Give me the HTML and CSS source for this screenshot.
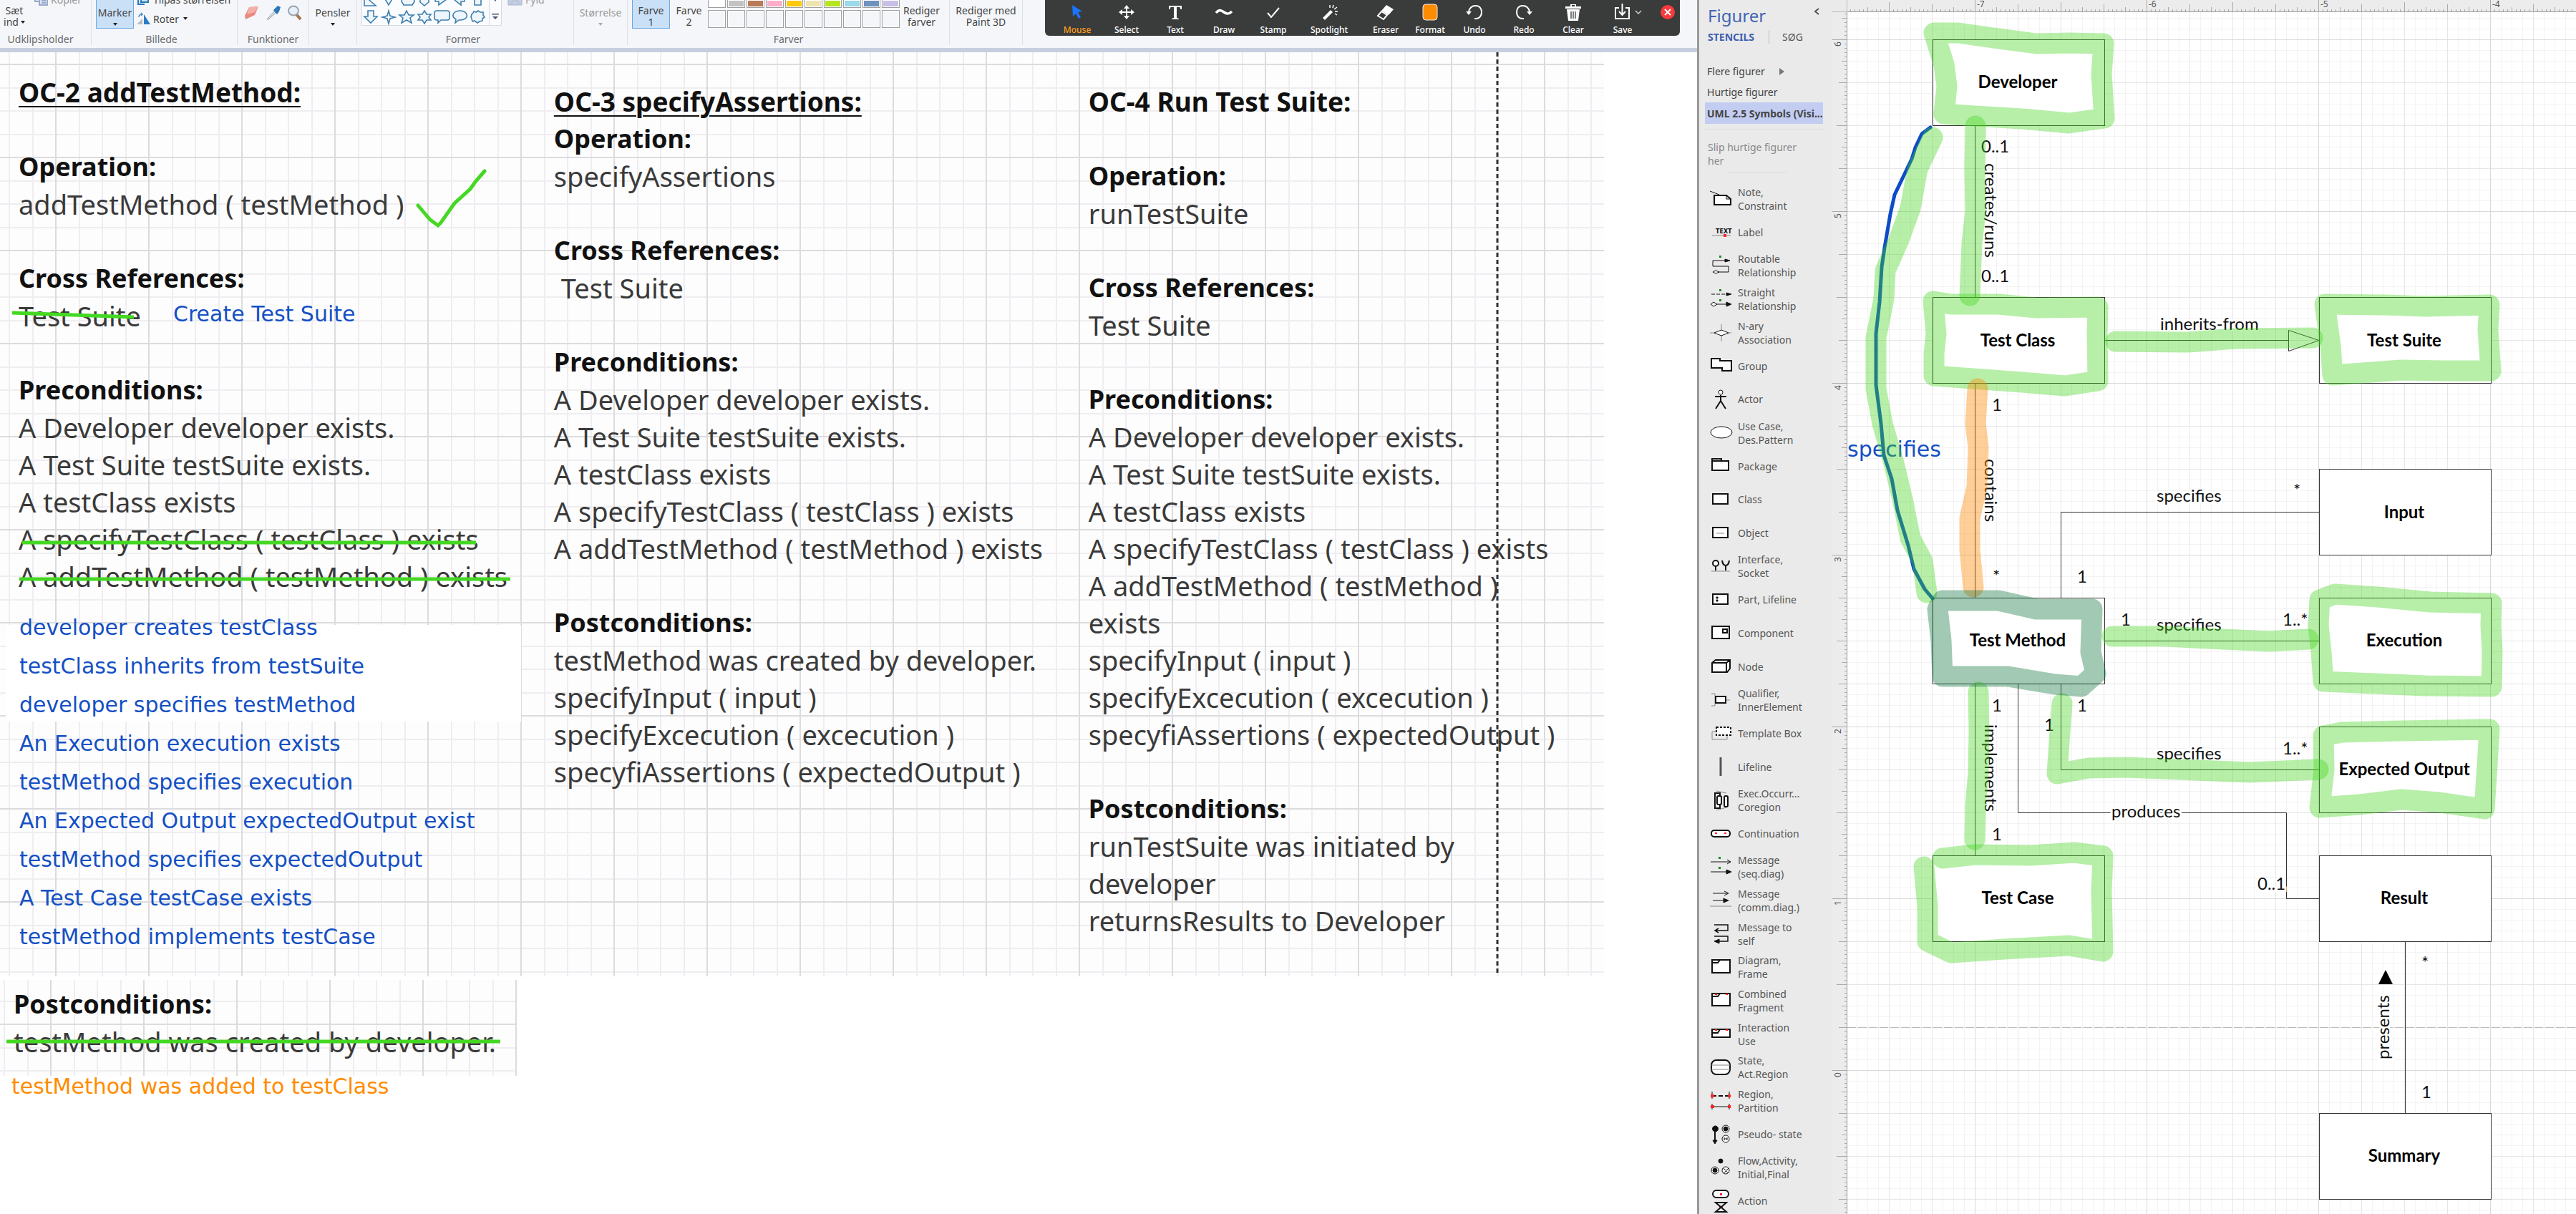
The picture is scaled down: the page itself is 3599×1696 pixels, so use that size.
FILE: index.html
```html
<!DOCTYPE html>
<html lang="da">
<head>
<meta charset="utf-8">
<title>Operation contracts</title>
<link rel="stylesheet" href="styles.css">
</head>
<body>
<main class="paint">
  <header class="ribbon">
    <section class="group group-clip">
      <div class="tools">
        <button class="tool tool-paste">Sæt<br>ind<i class="caret caret-inline"></i></button>
        <button class="cut-item is-disabled"><svg width="20" height="10" viewBox="0 0 20 10"><path d="M1 0v4h6M7 0v9h11V0M10 3h6M10 6h6" fill="#dfe5f2" stroke="#9aa9cc" stroke-width="2"/></svg>Kopier</button>
      </div>
      <h2>Udklipsholder</h2>
    </section>
    <section class="group group-image">
      <div class="tools">
        <button class="tool tool-on tool-split">Marker<i class="caret"></i></button>
        <div class="stack">
          <button class="cut-item"><svg width="20" height="10" viewBox="0 0 20 10"><path d="M2 2v6h9M6 0v5h10V0" fill="#cfe3f7" stroke="#2a78b8" stroke-width="2"/></svg>Tilpas størrelsen</button>
          <button class="row-item"><svg width="20" height="18" viewBox="0 0 20 18"><path d="M0 16L8 8v8z" fill="#b9bcc0"/><path d="M10 2v14h9z" fill="#2b7cc4"/><path d="M3 6c0-3 2-4 4-4M6 0l2 2-2 2" fill="none" stroke="#4a90d0" stroke-width="1.5"/></svg>Roter<i class="caret caret-inline"></i></button>
        </div>
      </div>
      <h2>Billede</h2>
    </section>
    <section class="group group-tools">
      <div class="tools icon-tools">
        <button aria-label="Viskelæder"><svg width="22" height="20" viewBox="0 0 22 20"><path d="M7 2l13-1-5 12-13 6-1-5z" fill="#e88a80"/><path d="M7 2l13-1-5 8-11 3z" fill="#f4b0a8"/></svg></button>
        <button aria-label="Farvevælger"><svg width="22" height="20" viewBox="0 0 22 20"><path d="M2 19L12 8l2 2L4 19z" fill="#dfe9f2" stroke="#8796a6"/><path d="M11 6l6-6 4 2-2 6-3 4z" fill="#2d75b8"/></svg></button>
        <button aria-label="Lup"><svg width="22" height="20" viewBox="0 0 22 20"><path d="M13 12l6 7" stroke="#a5764a" stroke-width="4"/><ellipse cx="9" cy="7" rx="7" ry="6.500" fill="#e6f0f8" stroke="#98a4b0" stroke-width="2"/></svg></button>
      </div>
      <h2>Funktioner</h2>
    </section>
    <section class="group group-brush">
      <div class="tools"><button class="tool">Pensler<i class="caret"></i></button></div>
    </section>
    <section class="group group-shapes">
      <div class="tools">
        <svg class="gallery" width="196" height="36" viewBox="0 0 196 36" aria-label="Former">
          <path d="M.5 0v35.500h195V0M178.500 0v35" fill="#fbfcfe" stroke="#d5dbe4"/>
          <g fill="#eef6fc" stroke="#3f7fae" stroke-width="1.600">
            <path d="M4-6L20 8H4zM32-3l6 10 6-10M56-4v6l3 5h12l3-5v-6M82-4v7l6 5 6-5v-7M103-6v8h5v5l11-8M144-6v8h-5v5l-10-8M158-4V7h9v-11"/>
            <path d="M9 15h8v8h5l-9 9-9-9h5zM38 15l2 7 7 2-7 2-2 7-2-7-7-2 7-2zM63 15l3 6h7l-5 4 2 7-7-4-7 4 2-7-5-4h7zM88 15l3 5h6l-3 4 3 4h-6l-3 5-3-5h-6l3-4-3-4h6zM105 15h15q3 0 3 3v7q0 3-3 3h-9l-4 4v-4h-2q-3 0-3-3v-7q0-3 3-3zM138 15c12 0 13 13 0 13h-2l-5 4 1-5c-8-5-3-12 6-12zM157 16l3 1 3-2 3 2h4v4l2 3-3 2v3l-4 1-3 2-4-3-3 1-1-4-1-2 1-4 2-2z"/>
          </g>
          <path d="M184-2h6l-3 4zM182 19h10v1.500h-10zM183 23h8l-4 4z" fill="#4a5570"/>
        </svg>
        <button class="cut-item is-disabled"><svg width="22" height="10" viewBox="0 0 22 10"><path d="M1 9V1h19v8zM5 6l6-5 5 5" fill="#c3cce0" stroke="#a8b4d0"/></svg>Fyld</button>
      </div>
      <h2>Former</h2>
    </section>
    <section class="group group-size">
      <div class="tools"><button class="tool is-disabled" disabled>Størrelse<i class="caret"></i></button></div>
    </section>
    <section class="group group-colors">
      <div class="tools">
        <button class="tool tool-on tool-color">Farve<br>1</button>
        <button class="tool tool-color">Farve<br>2</button>
        <div class="swatches">
          <button class="c-white" aria-label="Hvid"></button><button class="c-grey" aria-label="Lysegrå"></button><button class="c-brown" aria-label="Brun"></button><button class="c-pink" aria-label="Rosa"></button><button class="c-gold" aria-label="Guld"></button><button class="c-cream" aria-label="Lysegul"></button><button class="c-lime" aria-label="Lime"></button><button class="c-sky" aria-label="Lys turkis"></button><button class="c-steel" aria-label="Blågrå"></button><button class="c-lilac" aria-label="Lavendel"></button>
          <button aria-label="Tom 1"></button><button aria-label="Tom 2"></button><button aria-label="Tom 3"></button><button aria-label="Tom 4"></button><button aria-label="Tom 5"></button><button aria-label="Tom 6"></button><button aria-label="Tom 7"></button><button aria-label="Tom 8"></button><button aria-label="Tom 9"></button><button aria-label="Tom 10"></button>
        </div>
        <button class="tool tool-color">Rediger<br>farver</button>
      </div>
      <h2>Farver</h2>
    </section>
    <section class="group group-3d">
      <div class="tools"><button class="tool">Rediger med<br>Paint 3D</button></div>
    </section>
  </header>

  <nav class="annotate" aria-label="Annotation">
    <button class="w70 is-active"><svg viewBox="0 0 32 24"><path d="M9 2l14 9-6 1 4 7-3 2-4-7-4 4z" fill="#1a75ff"/></svg>Mouse</button>
    <button class="w68"><svg viewBox="0 0 32 24"><path d="M16 2l4 5h-3v4h5V8l5 4-5 4v-3h-5v4h3l-4 5-4-5h3v-4h-5v3l-5-4 5-4v3h5V7h-3z" fill="#fff"/></svg>Select</button>
    <button class="w68"><svg viewBox="0 0 32 24"><path d="M7 3h18v5h-1.500l-1-3H18v15l3 1v1H11v-1l3-1V5H9.500l-1 3H7z" fill="#fff"/></svg>Text</button>
    <button class="w68"><svg viewBox="0 0 32 24"><path d="M5 13c4-5 7-4 11-1s7 3 11-1" fill="none" stroke="#fff" stroke-width="3.500"/></svg>Draw</button>
    <button class="w70"><svg viewBox="0 0 32 24"><path d="M8 13l5 6L24 6" fill="none" stroke="#fff" stroke-width="2"/></svg>Stamp</button>
    <button class="w86"><svg viewBox="0 0 32 24"><path d="M7 20L18 9l3 3L10 23z" fill="#fff"/><path d="M17 2v4M22 2l-1 4M27 5l-4 3M28 11h-4M27 16l-3-2" stroke="#fff" stroke-width="1.500"/></svg>Spotlight</button>
    <button class="w72"><svg viewBox="0 0 32 24"><path d="M17 2l10 6-7 8-10-6z" fill="#fff"/><path d="M10 11l8 5-5 6-8-5z" fill="none" stroke="#fff" stroke-width="2"/></svg>Eraser</button>
    <button class="w52"><svg viewBox="0 0 32 24"><rect x="6" y="1" width="20" height="22" rx="4" fill="#ff8c00" stroke="#eee"/></svg>Format</button>
    <button class="w72"><svg viewBox="0 0 32 24"><path d="M8 12c1-7 6-9 10-9 5 0 8 4 8 9s-3 9-8 9h-2" fill="none" stroke="#fff" stroke-width="2"/><path d="M4 11h8l-4 5z" fill="#fff"/></svg>Undo</button>
    <button class="w66"><svg viewBox="0 0 32 24"><path d="M24 12c-1-7-6-9-10-9-5 0-8 4-8 9s3 9 8 9h2" fill="none" stroke="#fff" stroke-width="2"/><path d="M28 11h-8l4 5z" fill="#fff"/></svg>Redo</button>
    <button class="w72"><svg viewBox="0 0 32 24"><path d="M5 4h22v3H5zM7 8h18l-2 16H9zM12 1h8v3h-2V2h-4v2h-2z" fill="#fff"/><path d="M13 11v10M16 11v10M19 11v10" stroke="#3a3b3b" stroke-width="1.300"/></svg>Clear</button>
    <button class="w66"><svg viewBox="0 0 32 24"><path d="M11 6H6v15h19V6h-5M15.500 0v15M11 11l4.500 5 4.500-5" fill="none" stroke="#fff" stroke-width="2"/></svg>Save</button>
    <button class="more" aria-label="More save options"><svg width="10" height="8" viewBox="0 0 10 8"><path d="M1 2l4 4 4-4" fill="none" stroke="#ccc" stroke-width="1.500"/></svg></button>
    <button class="close" aria-label="Close"><svg width="20" height="20" viewBox="0 0 20 20"><circle cx="10" cy="10" r="10" fill="#f93a3d"/><path d="M6 6l8 8M14 6l-8 8" stroke="#fff" stroke-width="2"/></svg></button>
  </nav>

  <div class="workspace">
    <article class="sheet">
      <section class="contract contract-first">
        <h3 class="under">OC-2 addTestMethod:</h3>
        <h4>Operation:</h4>
        <p>addTestMethod ( testMethod )</p>
        <h4>Cross References:</h4>
        <p>Test Suite</p>
        <h4>Preconditions:</h4>
        <p>A Developer developer exists.</p>
        <p>A Test Suite testSuite exists.</p>
        <p>A testClass exists</p>
        <p>A specifyTestClass ( testClass ) exists</p>
        <p>A addTestMethod ( testMethod ) exists</p>
        <ul class="additions">
          <li>developer creates testClass</li>
          <li>testClass inherits from testSuite</li>
          <li>developer specifies testMethod</li>
          <li>An Execution execution exists</li>
          <li>testMethod specifies execution</li>
          <li>An Expected Output expectedOutput exist</li>
          <li>testMethod specifies expectedOutput</li>
          <li>A Test Case testCase exists</li>
          <li>testMethod implements testCase</li>
        </ul>
      </section>
      <section class="contract">
        <h3 class="under">OC-3 specifyAssertions:</h3>
        <h4 class="tight">Operation:</h4>
        <p>specifyAssertions</p>
        <h4>Cross References:</h4>
        <p class="nudge">Test Suite</p>
        <h4>Preconditions:</h4>
        <p>A Developer developer exists.</p>
        <p>A Test Suite testSuite exists.</p>
        <p>A testClass exists</p>
        <p>A specifyTestClass ( testClass ) exists</p>
        <p>A addTestMethod ( testMethod ) exists</p>
        <h4>Postconditions:</h4>
        <p>testMethod was created by developer.</p>
        <p>specifyInput ( input )</p>
        <p>specifyExcecution ( excecution )</p>
        <p>specyfiAssertions ( expectedOutput )</p>
      </section>
      <section class="contract">
        <h3>OC-4 Run Test Suite:</h3>
        <h4>Operation:</h4>
        <p>runTestSuite</p>
        <h4>Cross References:</h4>
        <p>Test Suite</p>
        <h4>Preconditions:</h4>
        <p>A Developer developer exists.</p>
        <p>A Test Suite testSuite exists.</p>
        <p>A testClass exists</p>
        <p>A specifyTestClass ( testClass ) exists</p>
        <p>A addTestMethod ( testMethod )<br>exists</p>
        <p>specifyInput ( input )</p>
        <p>specifyExcecution ( excecution )</p>
        <p>specyfiAssertions ( expectedOutput )</p>
        <h4>Postconditions:</h4>
        <p>runTestSuite was initiated by<br>developer</p>
        <p>returnsResults to Developer</p>
      </section>
    </article>
    <article class="strip">
      <h4>Postconditions:</h4>
      <p>testMethod was created by developer.</p>
    </article>
    <p class="orange-note">testMethod was added to testClass</p>
    <svg class="ink" width="2240" height="1500" viewBox="0 73 2240 1500">
      <path class="page-break" d="M2092 73V1361"/>
      <g class="pen-green">
        <path d="M584 287l17 20 11 8 4-4 19-27 22-20 7-10 13-15" stroke-linecap="round"/>
        <path d="M17 437L187 443M31 758H665M27 809H713M9 1455H699"/>
      </g>
      <text class="pen-text" x="242" y="449">Create Test Suite</text>
    </svg>
  </div>
</main>

<aside class="visio">
  <section class="stencils">
    <header class="stencils-head"><h1>Figurer</h1><button aria-label="Skjul"><svg width="8" height="10" viewBox="0 0 8 10"><path d="M7 1L2 5l5 4" fill="none" stroke="#555" stroke-width="2"/></svg></button></header>
    <div class="tabs"><button class="tab-on">STENCILS</button><button>SØG</button></div>
    <div class="sets">
      <button>Flere figurer<i class="arrow"></i></button>
      <button>Hurtige figurer</button>
      <button class="set-on">UML 2.5 Symbols (Visi...</button>
    </div>
    <p class="drop-hint">Slip hurtige figurer<br>her</p>
    <ul class="shapes">
      <li><svg viewBox="0 0 32 32"><path d="M1 5l13 5"/><path class="b" d="M7 11h17l6 5v8H7z"/><path d="M24 11v5h6"/></svg><span>Note,<br>Constraint</span></li>
      <li><svg viewBox="0 0 32 32"><text x="9" y="17">TEXT</text><path class="g" d="M4 20h26"/><path class="r" d="M20 18h4v4h-4z"/></svg><span>Label</span></li>
      <li><svg viewBox="0 0 32 32"><path d="M28 9H5v8h22v8H13"/><path class="k" d="M22 7l7 2-7 2z"/><path class="b1" d="M5 25l4-2 5 2-5 2z"/><path class="n" d="M14 2h3v3h-3z"/></svg><span>Routable<br>Relationship</span></li>
      <li><svg viewBox="0 0 32 32"><path d="M3 9h24" stroke-dasharray="5 2"/><path d="M2 23h26"/><path class="k" d="M24 7l7 2-7 2zM24 20l7 3-7 3z"/><path class="b1" d="M2 23l4-3 5 3-5 3z"/><path class="n" d="M14 2h3v3h-3zM14 16h3v3h-3z"/></svg><span>Straight<br>Relationship</span></li>
      <li><svg viewBox="0 0 32 32"><path class="g" d="M1 16h30M17 4v24"/><path class="b1" d="M7 16l10-4 10 4-10 4z"/></svg><span>N-ary<br>Association</span></li>
      <li><svg viewBox="0 0 32 32"><path class="b" d="M3 6h12v3h16v14H18v-4H3z"/></svg><span>Group</span></li>
      <li><svg viewBox="0 0 32 32"><path d="M8 12h16M16 10v8l-7 11M16 18l7 11" stroke-width="2"/><circle class="b1" cx="16" cy="6" r="3"/></svg><span>Actor</span></li>
      <li><svg viewBox="0 0 32 32"><ellipse class="b1" cx="17" cy="15" rx="15" ry="8"/></svg><span>Use Case,<br>Des.Pattern</span></li>
      <li><svg viewBox="0 0 32 32"><path class="b" d="M4 9V6h13v3h10v13H4zM4 9h13"/></svg><span>Package</span></li>
      <li><svg viewBox="0 0 32 32"><path class="b" d="M5 8h21v14H5z"/></svg><span>Class</span></li>
      <li><svg viewBox="0 0 32 32"><path class="b" d="M5 8h21v14H5z"/><path class="g" d="M10 16h11"/></svg><span>Object</span></li>
      <li><svg viewBox="0 0 32 32"><path d="M9 15v7M23 15v7M18 8q1 7 5 7t5-7" stroke-width="2"/><path class="g" d="M3 23h26"/><circle class="b" cx="9" cy="12" r="4"/></svg><span>Interface,<br>Socket</span></li>
      <li><svg viewBox="0 0 32 32"><path class="b" d="M5 8h21v14H5z"/><path class="k" d="M10 12h2v2h-2zM10 16h2v2h-2z"/></svg><span>Part, Lifeline</span></li>
      <li><svg viewBox="0 0 32 32"><path class="b" d="M4 6h24v17H4z"/><path d="M19 10h6v5h-6z" stroke-width="2"/></svg><span>Component</span></li>
      <li><svg viewBox="0 0 32 32"><path class="b" d="M4 11l5-4h20v12l-4 5H4zM4 11h20v12M24 11l5-4"/></svg><span>Node</span></li>
      <li><svg viewBox="0 0 32 32"><path class="g" d="M3 7h5v17H3M23 16h6"/><path class="b" d="M9 11h14v9H9z"/></svg><span>Qualifier,<br>InnerElement</span></li>
      <li><svg viewBox="0 0 32 32"><path class="g" d="M10 13H4v11h21v-5"/><path class="b" d="M10 7h20v11H10z" stroke-dasharray="3 2"/></svg><span>Template Box</span></li>
      <li><svg viewBox="0 0 32 32"><path class="h" d="M16 3v26"/></svg><span>Lifeline</span></li>
      <li><svg viewBox="0 0 32 32"><path class="g" d="M10 3l14 3M10 30l14-4"/><rect class="b" x="8" y="6" width="7" height="21"/><rect class="b" x="11" y="10" width="6" height="12" rx="2"/><rect class="b" x="21" y="10" width="5" height="15" rx="2"/></svg><span>Exec.Occurr...<br>Coregion</span></li>
      <li><svg viewBox="0 0 32 32"><rect class="b" x="3" y="11" width="26" height="9" rx="4"/><path class="r" d="M8 14h3v2H8zM21 14h3v2h-3z"/></svg><span>Continuation</span></li>
      <li><svg viewBox="0 0 32 32"><path d="M2 9h28M2 23h24M25 6l5 3-5 3"/><path class="k" d="M24 20l7 3-7 3z"/><path class="n" d="M13 2h3v3h-3zM13 16h3v3h-3z"/></svg><span>Message<br>(seq.diag)</span></li>
      <li><svg viewBox="0 0 32 32"><path d="M5 6h21M5 16h17M21 3l6 3-6 3"/><path class="k" d="M20 13l7 3-7 3z"/><path class="g" d="M1 24h30"/></svg><span>Message<br>(comm.diag.)</span></li>
      <li><svg viewBox="0 0 32 32"><path d="M7 3h19v8H8M7 19h19v7H8M13 8l-5 3 5 3" stroke-width="1.500"/><path class="k" d="M14 23l-7 3 7 3z"/></svg><span>Message to<br>self</span></li>
      <li><svg viewBox="0 0 32 32"><path class="b" d="M4 6h25v18H4zM4 10h8l3-4"/></svg><span>Diagram,<br>Frame</span></li>
      <li><svg viewBox="0 0 32 32"><path class="b" d="M4 6h25v17H4zM4 10h8l3-4"/><path class="r" d="M8 6h3v2H8zM23 6h3v2h-3z"/></svg><span>Combined<br>Fragment</span></li>
      <li><svg viewBox="0 0 32 32"><path class="b" d="M4 9h25v11H4zM4 14h8l3-5"/><path class="r" d="M8 9h3v2H8zM23 9h3v2h-3z"/></svg><span>Interaction<br>Use</span></li>
      <li><svg viewBox="0 0 32 32"><rect class="b" x="3" y="6" width="26" height="20" rx="7"/><path class="g" d="M3 13h26M3 19h26"/></svg><span>State,<br>Act.Region</span></li>
      <li><svg viewBox="0 0 32 32"><path d="M4 9h24" stroke-width="2" stroke-dasharray="6 3"/><path d="M4 24h24M4 3v10M28 3v10M4 20v8M28 20v8"/><path class="r" d="M2 7h5v4H2zM26 7h4v4h-4zM2 22h5v4H2zM26 22h4v4h-4z"/></svg><span>Region,<br>Partition</span></li>
      <li><svg viewBox="0 0 32 32"><path d="M8 8v18" stroke-width="2"/><path class="k" d="M5 24h6l-3 5zM8 4a4 4 0 1 0 1 0z"/><circle class="b1" cx="23" cy="8" r="5"/><circle class="k" cx="23" cy="8" r="3"/><circle class="b1" cx="23" cy="22" r="5"/><path d="M21 20v4M25 20v4M21 22h4"/></svg><span>Pseudo- state</span></li>
      <li><svg viewBox="0 0 32 32"><circle class="k" cx="16" cy="7" r="3"/><circle class="b1" cx="8" cy="20" r="5"/><circle class="k" cx="8" cy="20" r="3"/><circle class="b1" cx="23" cy="20" r="5"/><path d="M20 17l7 7M27 17l-7 7"/></svg><span>Flow,Activity,<br>Initial,Final</span></li>
      <li><svg viewBox="0 0 32 32"><rect class="b" x="5" y="1" width="22" height="10" rx="5"/><path class="r" d="M15 5h3v3h-3zM14 23h5v3h-5z"/><path d="M9 18h15L9 31h15z" stroke-width="2"/></svg><span>Action</span></li>
    </ul>
  </section>

  <div class="ruler-corner"></div>
  <div class="ruler ruler-top">
    <svg width="1018" height="17">
      <defs><pattern id="tickX" x="58" width="120" height="17" patternUnits="userSpaceOnUse"><path class="tick" d="M.5 3v14M30.500 10v7M60.500 6v11M90.500 10v7M6.500 13v4M12.500 13v4M18.500 13v4M24.500 13v4M36.500 13v4M42.500 13v4M48.500 13v4M54.500 13v4M66.500 13v4M72.500 13v4M78.500 13v4M84.500 13v4M96.500 13v4M102.500 13v4M108.500 13v4M114.500 13v4"/></pattern></defs>
      <rect width="1018" height="17" fill="url(#tickX)"/>
      <path class="tick" d="M178.500 0v17M418.500 0v17M658.500 0v17M898.500 0v17"/>
      <text x="181" y="10">-7</text><text x="421" y="10">-6</text><text x="661" y="10">-5</text><text x="901" y="10">-4</text>
    </svg>
  </div>
  <div class="ruler ruler-side">
    <svg width="21" height="1679">
      <defs><pattern id="tickY" y="38" width="21" height="120" patternUnits="userSpaceOnUse"><path class="tick" d="M6 .5h15M13 30.500h8M9 60.500h12M13 90.500h8M17 6.500h4M17 12.500h4M17 18.500h4M17 24.500h4M17 36.500h4M17 42.500h4M17 48.500h4M17 54.500h4M17 66.500h4M17 72.500h4M17 78.500h4M17 84.500h4M17 96.500h4M17 102.500h4M17 108.500h4M17 114.500h4"/></pattern></defs>
      <rect width="21" height="1679" fill="url(#tickY)"/>
      <path class="tick" d="M0 38.500h21M0 278.500h21M0 518.500h21M0 758.500h21M0 998.500h21M0 1238.500h21M0 1478.500h21"/>
      <g class="side-nums">
        <text transform="translate(12 48) rotate(-90)">6</text><text transform="translate(12 288) rotate(-90)">5</text><text transform="translate(12 528) rotate(-90)">4</text><text transform="translate(12 768) rotate(-90)">3</text><text transform="translate(12 1008) rotate(-90)">2</text><text transform="translate(12 1248) rotate(-90)">1</text><text transform="translate(12 1488) rotate(-90)">0</text>
      </g>
    </svg>
  </div>

  <div class="canvas">
    <svg width="1018" height="1679" viewBox="2581 17 1018 1679">
      <path class="page-edge" d="M2581 1435.500H3599"/>
      <g class="wire">
        <path d="M2759.500 175V415M2759.500 535V835M2940 475.500H3197M3197.500 461.500v29L3240 475.500zM3240 715.500H2879.500V835M2940 895.500H3240M2879.500 955V1075.500H3240M2819.500 955V1135.500H3194.500V1255.500H3240M2759.500 955V1195M3360.500 1315V1555"/>
      </g>
      <g class="node">
        <rect x="2700.500" y="55.500" width="240" height="120"/><rect x="2700.500" y="415.500" width="240" height="120"/><rect x="3240.500" y="415.500" width="240" height="120"/><rect x="3240.500" y="655.500" width="240" height="120"/><rect x="2700.500" y="835.500" width="240" height="120"/><rect x="3240.500" y="835.500" width="240" height="120"/><rect x="3240.500" y="1015.500" width="240" height="120"/><rect x="2700.500" y="1195.500" width="240" height="120"/><rect x="3240.500" y="1195.500" width="240" height="120"/><rect x="3240.500" y="1555.500" width="240" height="120"/>
        <text x="2819" y="123">Developer</text><text x="2819" y="484">Test Class</text><text x="3359" y="484">Test Suite</text><text x="3359" y="724">Input</text><text x="2819" y="903">Test Method</text><text x="3359" y="903">Execution</text><text x="3359" y="1083">Expected Output</text><text x="2819" y="1263">Test Case</text><text x="3359" y="1263">Result</text><text x="3359" y="1623">Summary</text>
      </g>
      <g class="role">
        <text x="2768" y="213">0..1</text><text x="2768" y="394">0..1</text>
        <text x="3018" y="461">inherits-from</text>
        <text x="2783" y="574">1</text><text x="2784" y="813">*</text><text x="2902" y="814">1</text>
        <text x="3013" y="701">specifies</text><text x="3204" y="693">*</text>
        <text x="2963" y="874">1</text><text x="3013" y="881">specifies</text><text x="3189" y="874">1..*</text>
        <text x="2783" y="994">1</text><text x="2902" y="994">1</text><text x="2856" y="1021">1</text>
        <text x="3013" y="1061">specifies</text><text x="3189" y="1054">1..*</text>
        <text x="2950" y="1142">produces</text><text x="3154" y="1243">0..1</text><text x="2783" y="1174">1</text>
        <text x="3383" y="1353">*</text><text x="3383" y="1534">1</text>
        <text transform="translate(2773 228) rotate(90)">creates/runs</text>
        <text transform="translate(2773 641) rotate(90)">contains</text>
        <text transform="translate(2773 1012) rotate(90)">implements</text>
        <text transform="translate(3338 1480) rotate(-90)">presents</text>
        <path d="M3333 1355l10 20h-20z"/>
      </g>
      <text class="pen-text" x="2581" y="638">specifies</text>
      <path class="pen-blue" d="M2697 178L2685 187L2676 206L2671 222L2659 247L2647 272L2641 299L2633 346L2629 373L2626 422L2621 466L2621 538L2628 592L2632 636L2643 669L2651 713L2666 762L2674 795L2689 823L2700 836"/>
      <g class="marker">
        <path d="M2702 46L2736 46L2785 53L2845 61L2891 60L2939 61L2936 104L2940 165L2891 172L2825 166L2759 162L2716 159L2720 121L2716 90z"/>
        <path d="M2760 176L2759 236L2760 296L2755 340L2752 413"/>
        <path d="M2701 421L2726 425L2792 425L2845 430L2931 429L2930 466L2931 532L2885 539L2825 534L2702 525L2702 494L2705 466z"/>
        <path d="M2956 477L3057 478L3123 473L3231 472"/>
        <path d="M3248 425L3332 426L3388 428L3478 426L3476 461L3480 518L3415 518L3355 517L3259 524L3256 483z"/>
        <path d="M2700 192L2679 236L2669 291L2653 335L2634 378L2632 417L2621 472L2621 543L2630 592L2646 647L2659 702L2669 752L2686 784L2692 828"/>
        <path d="M3241 838L3262 830L3322 834L3395 841L3481 843L3480 873L3482 911L3481 959L3388 958L3246 952L3243 911L3239 873z"/>
        <path d="M2951 889L3024 889L3170 896L3225 893"/>
        <path d="M2881 983L2877 1036L2874 1081L2918 1073L2971 1072L3143 1079L3239 1075"/>
        <path d="M3272 1023L3355 1021L3478 1019L3475 1069L3471 1130L3408 1121L3355 1117L3296 1124L3241 1128L3247 1075L3246 1028z"/>
        <path d="M2764 967L2765 1020L2764 1080L2760 1124L2759 1173"/>
        <path d="M2714 1199L2759 1194L2838 1195L2898 1191L2938 1196L2936 1244L2938 1329L2891 1321L2799 1326L2726 1331L2693 1315L2693 1266L2688 1211"/>
        <path class="marker-orange" d="M2763 543L2760 592L2764 625L2762 680L2752 724L2752 768L2757 820"/>
        <path class="marker-teal" d="M2714 839L2792 839L2845 851L2923 851L2921 911L2928 941L2908 959L2871 956L2805 945L2714 945L2712 895L2707 851z"/>
      </g>
    </svg>
  </div>
</aside>
</body>
</html>
```
FILE: styles.css
```css
* { box-sizing: border-box; }

body {
  margin: 0;
  min-height: 100vh;
  display: flex;
  background: #fff;
  color: #444;
  font: 14px/16px "Noto Sans", "Open Sans", sans-serif;
}

h1, h2, h3, h4, p, ul { margin: 0; padding: 0; }
ul { list-style: none; }
svg { display: block; flex: none; overflow: visible; }

button {
  margin: 0;
  padding: 0;
  border: 0;
  background: none;
  color: inherit;
  font: inherit;
}

/* Paint window */
.paint {
  position: relative;
  flex: 1;
  min-width: 0;
  height: 100vh;
  overflow: hidden;
}

.ribbon {
  display: flex;
  height: 73px;
  background: #f4f6f9;
  border-bottom: 6px solid #c5cfe0;
  overflow: hidden;
}

.group {
  display: flex;
  flex: none;
  flex-direction: column;
  justify-content: space-between;
  height: 63px;
  padding: 0 6px;
  border-right: 1px solid #dde0e6;
}
.group h2 {
  color: #6a6a6a;
  font-size: 14px;
  font-weight: 400;
  line-height: 16px;
  text-align: center;
}
.group-clip { width: 128px; padding: 0; }
.group-clip h2 { padding-right: 14px; }
.group-image { width: 204px; }
.group-image h2 { padding-right: 8px; }
.group-tools { width: 100px; padding: 0; }
.group-brush { width: 67px; }
.group-shapes { width: 303px; }
.group-shapes h2 { padding-right: 6px; }
.group-size { width: 75px; padding: 0; }
.group-colors { width: 450px; }
.group-3d { width: 102px; padding: 0; }

.tools { display: flex; align-items: flex-start; }
.tool {
  flex: 1;
  height: 40px;
  padding-top: 6px;
  text-align: center;
  white-space: nowrap;
}
.tool-paste { flex: none; width: 40px; }
.tool-on {
  background: #c9e0f7;
  border: 1px solid #6aa9e6;
  border-top: 0;
}
.tool-split { flex: none; width: 53px; }
.tool-color { flex: none; width: 53px; }
.is-disabled { color: #999; }

.caret {
  display: block;
  width: 0;
  margin: 6px auto 0;
  border: 3px solid transparent;
  border-top: 4px solid #222;
  border-bottom: 0;
}
.is-disabled .caret { border-top-color: #aaa; }
.caret-inline { display: inline-block; margin: 0 0 3px 3px; }

.cut-item, .row-item {
  display: flex;
  align-items: flex-end;
  gap: 3px;
  white-space: nowrap;
}
.cut-item { height: 8px; margin-left: 8px; }
.row-item { align-items: center; margin: 10px 0 0 4px; }
.stack .cut-item { margin-left: 4px; }

.icon-tools { justify-content: center; gap: 8px; padding-top: 8px; }
.gallery { overflow: hidden; }

.swatches {
  display: grid;
  grid-template-columns: repeat(10, 25px);
  grid-template-rows: 11px 25px;
  gap: 3px 2px;
  padding-right: 4px;
}
.swatches button { border: 1px solid #a0a0a0; box-shadow: inset 0 0 0 1px #fff; }
.swatches button:nth-child(-n+10) { border-top: 0; }
.c-white { background: #fff; }
.c-grey { background: #c3c3c3; }
.c-brown { background: #b97a57; }
.c-pink { background: #ffaec9; }
.c-gold { background: #ffc90e; }
.c-cream { background: #efe4b0; }
.c-lime { background: #b5e61d; }
.c-sky { background: #99d9ea; }
.c-steel { background: #7092be; }
.c-lilac { background: #c8bfe7; }

/* Screen-share annotation bar, floating over the ribbon */
.annotate {
  position: absolute;
  top: 0;
  right: 24px;
  display: flex;
  width: 887px;
  height: 50px;
  padding: 5px 0 0 10px;
  border-radius: 0 0 6px 6px;
  background: #3a3b3b;
  color: #fff;
  font-size: 12px;
  font-weight: 500;
}
.annotate button {
  display: flex;
  flex: none;
  flex-direction: column;
  align-items: center;
  gap: 5px;
  height: 42px;
}
.annotate button > svg:first-child:not([width]) { width: 32px; height: 24px; }
.annotate .is-active { color: #ff9f1a; }
.w52 { width: 52px; }
.w66 { width: 66px; }
.w68 { width: 68px; }
.w70 { width: 70px; }
.w72 { width: 72px; }
.w86 { width: 86px; }
.annotate .more { width: 10px; margin-left: -16px; padding-top: 8px; }
.annotate .close { margin-left: 26px; padding-top: 2px; }

/* Contract sheet */
.workspace { position: relative; }

.sheet, .strip {
  background-color: #fdfdfd;
  background-image:
    linear-gradient(90deg, #dcdcde 2px, transparent 2px),
    linear-gradient(#dcdcde 2px, transparent 2px),
    linear-gradient(90deg, #efedf1 2px, transparent 2px, transparent 33px, #efedf1 33px, #efedf1 35px, transparent 35px),
    linear-gradient(#efedf1 2px, transparent 2px, transparent 33px, #efedf1 33px, #efedf1 35px, transparent 35px);
  background-size: 130px 130px, 130px 130px, 65px 65px, 65px 65px;
  background-position: 77px 16px;
}
.sheet {
  display: grid;
  grid-template-columns: repeat(3, 1fr);
  width: 94.5%;
  padding-bottom: 28px;
}
.contract {
  padding: 43px 0 0 27px;
  white-space: nowrap;
}
.contract-first { padding: 30px 0 0 26px; }

.contract, .strip {
  color: #3a3a3a;
  font-size: 38px;
  line-height: 52px;
}
h3, h4 {
  color: #111;
  font-size: 36px;
  font-weight: 700;
}
h3 { font-size: 37px; }
.contract h4 { margin-top: 52px; }
.contract h4.tight { margin-top: 0; }
.under { text-decoration: underline; text-decoration-thickness: 2px; text-underline-offset: 5px; }
.nudge { padding-left: 10px; }

.additions {
  margin: 19px 0 0 -18px;
  padding-left: 19px;
  width: 720px;
  background: linear-gradient(#fff, #fff) 0 23px / 100% 135px no-repeat;
  color: #1450c4;
  font: 30px/54px "DejaVu Sans", sans-serif;
}

.strip {
  width: 722px;
  margin-top: 5px;
  padding: 8px 0 22px 19px;
  background-position: 70px 61px;
  white-space: nowrap;
}
.orange-note {
  padding-left: 16px;
  color: #ff8c00;
  font: 30px/30px "DejaVu Sans", sans-serif;
}

.ink { position: absolute; top: 0; left: 0; }
.page-break { fill: none; stroke: #333; stroke-width: 3; stroke-dasharray: 6 4; }
.pen-green { fill: none; stroke: #44d822; stroke-width: 5; }
.pen-text { fill: #1450c4; font: 30px "DejaVu Sans", sans-serif; }
.pen-blue { fill: none; stroke: #0f4bc8; stroke-width: 5; stroke-linejoin: round; stroke-linecap: round; }

/* Visio window */
.visio {
  display: grid;
  flex: none;
  grid-template: 17px 1fr / 186px 21px 1fr;
  width: 34.12%;
  height: 100vh;
  overflow: hidden;
  border-left: 3px solid #999;
  background: #eaeaea;
}
.stencils {
  grid-row: 1 / 3;
  width: 174px;
  padding-left: 8px;
  color: #555;
  line-height: 19px;
}
.stencils-head { display: flex; justify-content: space-between; padding: 6px 6px 0 4px; }
.stencils-head h1 { color: #4363b4; font-size: 24px; font-weight: 400; line-height: 32px; }
.stencils-head button { height: 20px; }
.tabs { display: flex; height: 30px; padding: 4px 0 0 4px; align-items: flex-start; }
.tabs .tab-on { width: 86px; border-right: 1px solid #bbb; color: #3f5fb0; font-weight: 700; text-align: left; }
.tabs button:last-child { padding-left: 18px; }
.sets { padding: 17px 0 7px; border-bottom: 1px solid #ddd; }
.sets button {
  display: flex;
  align-items: center;
  gap: 20px;
  width: 165px;
  height: 29px;
  padding-left: 3px;
  color: #444;
  white-space: nowrap;
}
.sets .set-on { height: 30px; background: #c3cdf2; font-weight: 700; }
.arrow { width: 0; border: 5px solid transparent; border-left: 7px solid #777; border-right: 0; }
.drop-hint { padding: 15px 0 6px 4px; color: #888; }
.drop-hint::after {
  content: "";
  display: block;
  width: 84px;
  margin: 7px 0 6px 27px;
  border-top: 1px solid #dcdcdc;
}

.shapes { height: 0; }
.shapes li {
  display: flex;
  align-items: center;
  gap: 8px;
  height: 47px;
  padding-left: 6px;
}
.shapes li:nth-child(3n) { height: 46px; }
.shapes svg {
  width: 32px;
  height: 32px;
  fill: none;
  stroke: #111;
}
.shapes text { fill: #111; stroke: none; font: 700 8px "DejaVu Sans", sans-serif; }
.shapes .b { fill: #fff; stroke-width: 2; }
.shapes .b1 { fill: #fff; }
.shapes .g { stroke: #888; }
.shapes .h { stroke: #555; stroke-width: 3; }
.shapes .k { fill: #111; }
.shapes .r { fill: #f22; stroke: none; }
.shapes .n { fill: #1a8a1a; stroke: none; }

.ruler { overflow: hidden; background: #ececec; }
.ruler-corner { border: solid #bbb; border-width: 0 1px 1px 0; }
.ruler-top { border-bottom: 1px solid #999; }
.ruler-side { border-right: 1px solid #999; }
.ruler text { fill: #555; font-size: 12px; }
.tick { stroke: #aaa; fill: none; }

.canvas {
  overflow: hidden;
  background-color: #fff;
  background-image:
    linear-gradient(90deg, #dadada 1px, transparent 1px),
    linear-gradient(#dadada 1px, transparent 1px),
    linear-gradient(90deg, #e6e6e6 1px, transparent 1px),
    linear-gradient(#e6e6e6 1px, transparent 1px),
    linear-gradient(90deg, #f3f3f3 1px, transparent 1px),
    linear-gradient(#f3f3f3 1px, transparent 1px);
  background-size: 240px 240px, 240px 240px, 60px 60px, 60px 60px, 15px 15px, 15px 15px;
  background-position: 178px 38px;
}
.page-edge { stroke: #bbb; stroke-dasharray: 12 3; }
.wire { fill: none; stroke: #333; }
.node rect { fill: #fff; stroke: #333; }
.node text { fill: #000; font: 700 24px Lato, sans-serif; text-anchor: middle; }
.role text { fill: #111; stroke: #fff; stroke-width: 6px; paint-order: stroke; font: 24px Lato, sans-serif; }
.marker { fill: none; stroke: #42d41d; stroke-width: 29; stroke-linejoin: round; stroke-linecap: round; }
.marker path { opacity: .38; }
.marker .marker-orange { stroke: #ff8800; opacity: .4; }
.marker .marker-teal { stroke: #10733a; opacity: .39; }
```
